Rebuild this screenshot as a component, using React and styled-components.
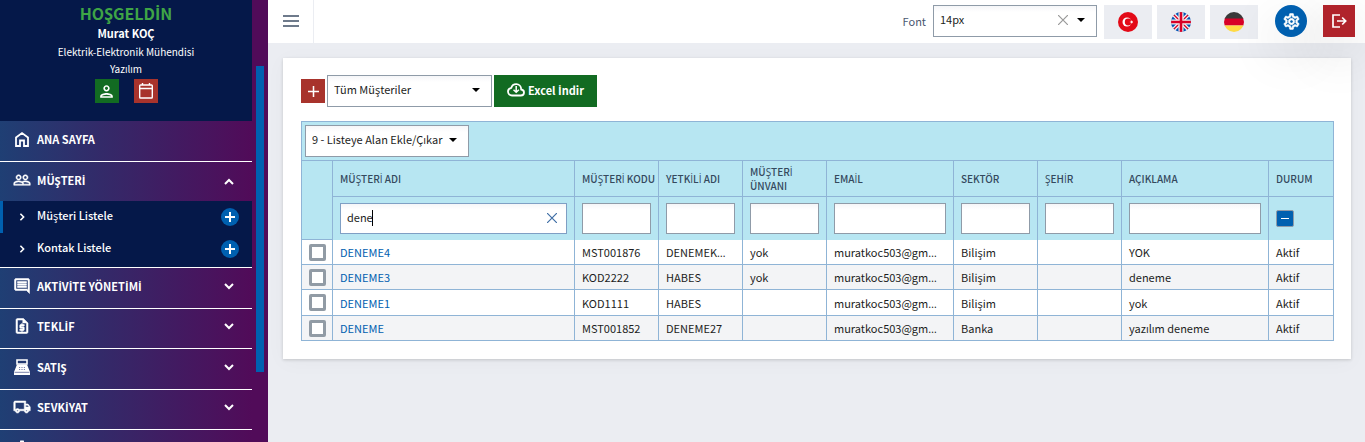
import React from 'react';
import styled, { createGlobalStyle, css } from 'styled-components';
import {
  MdPeopleOutline, MdOutlineRequestQuote, MdOutlineLocalShipping,
  MdOutlinePerson, MdOutlineComment, MdOutlineSettings,
} from 'react-icons/md';

const FONT = '"Noto Sans CJK JP", "Open Sans", "Noto Sans", sans-serif';
const LATIN = '"Open Sans", "Noto Sans", sans-serif';

const GlobalStyle = createGlobalStyle`
  *, *::before, *::after { box-sizing: border-box; }
  body { margin: 0; font: 11px/20px ${FONT}; color: #1c1d22; background: #ebedf2; }
  button, input, select { font: inherit; color: inherit; margin: 0; border-radius: 0; }
  a { text-decoration: none; color: inherit; }
  svg { display: block; flex: none; }
`;

/* The CJK family has no dotted capital I and centres its ellipsis, so both take the Latin family. */
const LatinGlyph = styled.span`
  font-family: ${LATIN};
  line-height: 1;
`;
const Label = ({ children }) => (
  <span>
    {children.split(/([İ…])/).map((part, i) => (/[İ…]/.test(part) ? <LatinGlyph key={i}>{part}</LatinGlyph> : part))}
  </span>
);

const Page = styled.div`
  display: grid;
  grid-template-columns: 268px minmax(0, 1fr);
  height: 100vh;
  overflow: hidden;
`;

/* ---------- sidebar ---------- */
const Sidebar = styled.aside`
  display: grid;
  grid-template-columns: minmax(0, 1fr) 16px;
  min-height: 0;
  overflow: hidden;
  background: linear-gradient(to right, #1f3f74, #510b59 94%);
  color: #fff;
`;
const SidebarBody = styled.div`
  min-height: 0;
  overflow: hidden;
`;
const ScrollTrack = styled.div`
  padding: 66px 4px 0;
`;
const ScrollThumb = styled.div`
  height: 306px;
  background: #0060b0;
`;
const Profile = styled.header`
  display: flex;
  flex-direction: column;
  align-items: center;
  height: 121px;
  padding-top: 3px;
  background: #051849;
  font-size: 10px;
  line-height: 17px;
`;
const Welcome = styled.strong`
  font-size: 16px;
  line-height: 20px;
  color: #3fa546;
`;
const UserName = styled.strong`
  font-size: 11px;
  line-height: 20px;
`;
const ProfileActions = styled.div`
  display: flex;
  gap: 15px;
  margin-top: 2px;
`;
const IconButton = styled.button`
  display: grid;
  place-items: center;
  width: ${p => p.$size || 24}px;
  height: ${p => p.$size || 24}px;
  padding: 0;
  border: 0;
  border-radius: ${p => (p.$round ? '50%' : 0)};
  background: ${p => p.$bg};
  color: #fff;
  box-shadow: ${p => (p.$raised ? '0 16px 50px rgba(0, 0, 0, 0.15)' : 'none')};
`;
const MenuRow = styled.a`
  display: grid;
  grid-template-columns: 18px 1fr 10px;
  align-items: center;
  gap: 6px;
  height: ${p => (p.$height ? p.$height + 'px' : 'auto')};
  padding: 0 18px 4px 13px;
  border-bottom: ${p => (p.$open ? 0 : '1px solid #fff')};
  font-weight: 700;
`;
const MenuGroup = styled.div`
  display: grid;
  grid-auto-rows: 1fr;
  height: 162px;
`;
const SubMenu = styled.div`
  height: 67px;
  background: #051849;
  border-bottom: 1px solid #fff;
`;
const SubRow = styled.div`
  display: grid;
  grid-template-columns: 12px 1fr 18px;
  align-items: center;
  gap: 7px;
  height: 32px;
  padding: 0 13px 0 15px;
  border-left: 3px solid ${p => (p.$active ? '#0060b0' : 'transparent')};
  font-weight: 500;
`;
const SubLink = styled.a`
  padding-bottom: 4px;
`;

/* ---------- top bar ---------- */
const Main = styled.div`
  min-width: 0;
`;
const TopBar = styled.header`
  position: relative;
  z-index: 1;
  display: flex;
  align-items: center;
  height: 43px;
  padding-right: 10px;
  background: #fff;
`;
const MenuToggle = styled.button`
  display: grid;
  place-items: center;
  width: 46px;
  height: 43px;
  padding: 0 0 2px;
  border: 0;
  border-right: 1px solid #ebedf2;
  background: none;
  color: #3f4f66;
`;
const FontField = styled.div`
  display: flex;
  align-items: center;
  gap: 7px;
  margin-left: auto;
  padding-bottom: 2px;
  color: #4a5670;
`;
const Flags = styled.div`
  display: flex;
  gap: 5px;
  margin: 0 17px 0 7px;
`;
const FlagButton = styled.button`
  display: grid;
  place-items: center;
  width: 48px;
  height: 34px;
  padding: 0;
  border: 0;
  background: #ebedf2;
`;
const Session = styled.div`
  display: flex;
  gap: 16px;
  padding-bottom: 1px;
`;

/* ---------- form parts ---------- */
const SelectBox = styled.div`
  position: relative;
  width: ${p => p.$width}px;
`;
const Select = styled.select`
  appearance: none;
  display: block;
  width: 100%;
  height: 32px;
  padding: 0 6px 4px;
  border: 1px solid #8f9ba8;
  background: linear-gradient(#f5f6f8, #fff 6px);
  color: #1c1d22;
  line-height: 20px;
`;
const Adornment = styled.span`
  position: absolute;
  top: 0;
  bottom: 0;
  right: 12px;
  display: flex;
  align-items: center;
  gap: 9px;
  padding-bottom: 2px;
  pointer-events: none;
  color: #000;
`;
const FilterBox = styled.div`
  position: relative;
`;
const FilterInput = styled.input`
  display: block;
  width: 100%;
  height: 31px;
  padding: 0 6px 2px;
  border: 1px solid ${p => (p.$active ? '#7f9fc4' : '#8f9ba8')};
  background: linear-gradient(#f5f6f8, #fff 6px);
  outline: 0;
`;
const Caret = styled.span`
  position: absolute;
  top: 7px;
  left: 32px;
  width: 1px;
  height: 16px;
  background: #000;
`;
const ClearButton = styled.button`
  position: absolute;
  top: 0;
  right: 10px;
  height: 31px;
  padding: 0;
  border: 0;
  background: none;
  color: #3f6ea5;
`;
const Check = styled.input`
  appearance: none;
  display: block;
  width: 17px;
  height: 17px;
  border: 3px solid #919ba5;
  border-radius: 2px;
  background: #fff;
`;
const StateCheck = styled(Check)`
  width: 18px;
  border: 1px solid #8f9ba8;
  background: linear-gradient(#fff, #fff) center / 8px 1px no-repeat #0060b0;
`;

/* ---------- list ---------- */
const Card = styled.main`
  margin: 15px 14px 0 15px;
  padding: 17px 17px 18px 18px;
  background: #fff;
  box-shadow: 0 1px 3px rgba(0, 0, 0, 0.16), 0 3px 20px rgba(0, 0, 0, 0.03);
`;
const Tools = styled.div`
  display: flex;
  align-items: center;
  gap: 2px;
  margin-bottom: 14px;
`;
const ExportButton = styled.button`
  display: flex;
  align-items: center;
  justify-content: center;
  gap: 3px;
  width: 103px;
  height: 32px;
  padding: 0 0 2px;
  border: 0;
  background: #126b22;
  color: #fff;
  font-weight: 700;
`;
const ListBar = styled.div`
  height: 39px;
  padding: 3px;
  border: 1px solid #8fb4d6;
  border-bottom: 0;
  background: #b7e6f2;
`;
const Table = styled.table`
  width: 100%;
  table-layout: fixed;
  border-collapse: collapse;
`;
const cell = css`
  padding: 0 7px;
  border: 1px solid #8fb4d6;
  text-align: left;
`;
const Th = styled.th`
  ${cell}
  height: 36px;
  padding-right: 2px;
  background: #b7e6f2;
  color: #34495e;
  font-size: 10px;
  line-height: 14px;
  font-weight: 500;
`;
const FilterCell = styled.td`
  ${cell}
  height: 43px;
  border-bottom: 0;
  background: #b7e6f2;
`;
const Row = styled.tr`
  height: 25px;
  &:nth-child(even) { background: #f3f4f6; }
  &:nth-child(3n) { height: 26px; }
`;
const Td = styled.td`
  ${cell}
  border-top: 0;
  overflow: hidden;
  white-space: nowrap;
  text-overflow: ellipsis;
  line-height: 18px;
`;
const NameLink = styled.a`
  color: #0060b0;
`;

/* ---------- drawings ---------- */
const Chevron = ({ dir = 'down', size = 10, w = 2 }) => {
  const d = { down: 'M1 3l4 4 4-4', up: 'M1 9l4-4 4 4', right: 'M3 1l4 4-4 4' }[dir];
  return <svg width={size} height={size} viewBox="0 0 10 10" fill="none" stroke="currentColor" strokeWidth={w}><path d={d} /></svg>;
};
const Triangle = () => <svg width="8" height="4" viewBox="0 0 8 4"><path d="M0 0h8L4 4z" fill="currentColor" /></svg>;
const Cross = ({ color = 'currentColor' }) => (
  <svg width="10" height="10" viewBox="0 0 10 10" stroke={color} strokeWidth="1.2"><path d="M0 0l10 10M10 0L0 10" /></svg>
);
const Plus = ({ w = 2, size = 10 }) => (
  <svg width={size} height={size} viewBox="0 0 10 10" stroke="currentColor" strokeWidth={w}><path d="M5 0v10M0 5h10" /></svg>
);
const Home = () => (
  <svg width="18" height="18" viewBox="0 0 18 18" fill="none" stroke="currentColor" strokeWidth="1.8">
    <path d="M3 7.500L9 3l6 4.500V16h-4v-5.500H7V16H3z" />
  </svg>
);
const Register = () => (
  <svg width="18" height="18" viewBox="0 0 18 18">
    <path d="M4 2h10v4H4z" fill="none" stroke="currentColor" strokeWidth="1.600" />
    <path d="M4 6.500h10L17 14v3H1v-3z" fill="currentColor" />
    <path d="M6 9.500h1.200M8.400 9.500h1.200M10.800 9.500H12M6 11.500h1.200M8.400 11.500h1.200M10.800 11.500H12M1.500 14.300h15" stroke="#7b83ab" strokeWidth="1" />
  </svg>
);
const Calendar = () => (
  <svg width="14" height="16" viewBox="0 0 14 16" fill="none" stroke="currentColor" strokeWidth="1.4">
    <rect x="0.7" y="2" width="12.6" height="13" rx="0.8" /><path d="M1 5.5h12M3.5 0v2M10.5 0v2" />
  </svg>
);
const Burger = () => (
  <svg width="16" height="12" viewBox="0 0 16 12" stroke="currentColor" strokeWidth="1.5"><path d="M0 1h16M0 6h16M0 11h16" /></svg>
);
const CloudDownload = () => (
  <svg width="18" height="14" viewBox="0 0 18 14" fill="none" stroke="currentColor" strokeWidth="1.8">
    <path d="M5 12.500h8.800c2 0 3.200-1.300 3.200-3 0-1.600-1.100-2.800-2.800-3C14.200 3.400 12 1.200 9.200 1.200c-2.400 0-4.300 1.400-4.900 3.600C2.300 5.200 1 6.700 1 8.600c0 2.200 1.700 3.900 4 3.900z" />
    <path d="M9.200 3v6M6.500 6.800l2.700 2.500 2.700-2.500" strokeWidth="1.500" />
  </svg>
);
const Exit = () => (
  <svg width="15" height="14" viewBox="0 0 15 14" fill="none" stroke="currentColor" strokeWidth="1.700">
    <path d="M8 1H1v12h7M5 7h9M10.200 3.500L13.700 7l-3.500 3.500" />
  </svg>
);
const TurkishFlag = () => (
  <svg width="20" height="20" viewBox="0 0 20 20">
    <circle cx="10" cy="10" r="10" fill="#e30a17" /><circle cx="9" cy="10" r="4.500" fill="#fff" />
    <circle cx="10.200" cy="10" r="3.400" fill="#e30a17" />
    <path d="M11.500 10l1.400-.5v-1.500l.9 1.200 1.400-.4-.9 1.200.9 1.200-1.400-.4-.9 1.200v-1.500z" fill="#fff" />
  </svg>
);
const BritishFlag = () => (
  <svg width="20" height="20" viewBox="0 0 20 20">
    <clipPath id="uk"><circle cx="10" cy="10" r="10" /></clipPath>
    <g clipPath="url(#uk)">
      <path d="M0 0h20v20H0z" fill="#0052b4" />
      <path d="M0 0l20 20M20 0L0 20" stroke="#f0f0f0" strokeWidth="4" />
      <path d="M0 0l20 20M20 0L0 20" stroke="#d80027" strokeWidth="1.300" />
      <path d="M10 0v20M0 10h20" stroke="#f0f0f0" strokeWidth="5" />
      <path d="M10 0v20M0 10h20" stroke="#d80027" strokeWidth="2.600" />
    </g>
  </svg>
);
const GermanFlag = () => (
  <svg width="20" height="20" viewBox="0 0 20 20">
    <clipPath id="de"><circle cx="10" cy="10" r="10" /></clipPath>
    <g clipPath="url(#de)">
      <path d="M0 0h20v7H0z" fill="#3a3a3a" /><path d="M0 6.500h20v7H0z" fill="#d80027" /><path d="M0 13.500h20V20H0z" fill="#ffda44" />
    </g>
  </svg>
);
const Bold = styled.span`
  path:not([fill='none']) { stroke: currentColor; stroke-width: 0.7px; }
  path[fill='none'] { stroke: none; }
`;

const groups = [
  ['AKTİVİTE YÖNETİMİ', <Bold><MdOutlineComment size={18} /></Bold>],
  ['TEKLİF', <Bold><MdOutlineRequestQuote size={18} /></Bold>],
  ['SATIŞ', <Register />],
  ['SEVKİYAT', <Bold><MdOutlineLocalShipping size={18} /></Bold>],
];
const columns = [
  ['MÜŞTERİ ADI'], ['MÜŞTERİ KODU', 84], ['YETKİLİ ADI', 84], ['MÜŞTERİ ÜNVANI', 84], ['EMAİL', 127],
  ['SEKTÖR', 84], ['ŞEHİR', 84], ['AÇIKLAMA', 147], ['DURUM', 65],
];
const rows = [
  ['DENEME4', 'MST001876', 'DENEMEK…', 'yok', 'muratkoc503@gm…', 'Bilişim', '', 'YOK', 'Aktif'],
  ['DENEME3', 'KOD2222', 'HABES', 'yok', 'muratkoc503@gm…', 'Bilişim', '', 'deneme', 'Aktif'],
  ['DENEME1', 'KOD1111', 'HABES', '', 'muratkoc503@gm…', 'Bilişim', '', 'yok', 'Aktif'],
  ['DENEME', 'MST001852', 'DENEME27', '', 'muratkoc503@gm…', 'Banka', '', 'yazılım deneme', 'Aktif'],
];

export default function App() {
  return (
    <Page>
      <GlobalStyle />
      <Sidebar>
        <SidebarBody>
          <Profile>
            <Welcome><Label>HOŞGELDİN</Label></Welcome>
            <UserName>Murat KOÇ</UserName>
            <span>Elektrik-Elektronik Mühendisi</span>
            <span>Yazılım</span>
            <ProfileActions>
              <IconButton $bg="#126b22" aria-label="Profil"><MdOutlinePerson size={19} /></IconButton>
              <IconButton $bg="#a8332c" aria-label="Takvim"><Calendar /></IconButton>
            </ProfileActions>
          </Profile>
          <nav>
            <MenuRow href="#" $height={41}><Home /><Label>ANA SAYFA</Label></MenuRow>
            <MenuRow href="#" $height={39} $open>
              <Bold><MdPeopleOutline size={18} /></Bold><Label>MÜŞTERİ</Label><Chevron dir="up" />
            </MenuRow>
            <SubMenu>
              {['Müşteri Listele', 'Kontak Listele'].map((t, i) => (
                <SubRow key={t} $active={i === 0}>
                  <Chevron dir="right" size={8} />
                  <SubLink href="#">{t}</SubLink>
                  <IconButton $bg="#0060b0" $round $size={18} aria-label={t + ' ekle'}><Plus /></IconButton>
                </SubRow>
              ))}
            </SubMenu>
            <MenuGroup>
              {groups.map(([t, icon]) => (
                <MenuRow key={t} href="#">{icon}<Label>{t}</Label><Chevron /></MenuRow>
              ))}
            </MenuGroup>
            <MenuRow href="#" $height={41} aria-label="Ayarlar"><MdOutlineSettings size={18} /></MenuRow>
          </nav>
        </SidebarBody>
        <ScrollTrack><ScrollThumb /></ScrollTrack>
      </Sidebar>

      <Main>
        <TopBar>
          <MenuToggle aria-label="Menü"><Burger /></MenuToggle>
          <FontField>
            <label htmlFor="font">Font</label>
            <SelectBox $width={164}>
              <Select id="font"><option>14px</option></Select>
              <Adornment><Cross color="#999" /><Triangle /></Adornment>
            </SelectBox>
          </FontField>
          <Flags>
            <FlagButton aria-label="Türkçe"><TurkishFlag /></FlagButton>
            <FlagButton aria-label="English"><BritishFlag /></FlagButton>
            <FlagButton aria-label="Deutsch"><GermanFlag /></FlagButton>
          </Flags>
          <Session>
            <IconButton $bg="#0060b0" $round $raised $size={32} aria-label="Ayarlar"><Bold><MdOutlineSettings size={19} /></Bold></IconButton>
            <IconButton $bg="#b0232b" $raised $size={32} aria-label="Çıkış"><Exit /></IconButton>
          </Session>
        </TopBar>

        <Card>
          <Tools>
            <IconButton $bg="#a8332c" aria-label="Yeni müşteri"><Plus w={1.4} size={11} /></IconButton>
            <SelectBox $width={165}>
              <Select aria-label="Müşteri grubu"><option>Tüm Müşteriler</option></Select>
              <Adornment><Triangle /></Adornment>
            </SelectBox>
            <ExportButton><CloudDownload /><Label>Excel İndir</Label></ExportButton>
          </Tools>
          <ListBar>
            <SelectBox $width={164}>
              <Select aria-label="Alanlar"><option>9 - Listeye Alan Ekle/Çıkar</option></Select>
              <Adornment><Triangle /></Adornment>
            </SelectBox>
          </ListBar>
          <Table>
            <colgroup>
              <col style={{ width: 31 }} />
              {columns.map(([t, w]) => <col key={t} style={{ width: w }} />)}
            </colgroup>
            <thead>
              <tr>
                <Th rowSpan={2} aria-label="Seç" />
                {columns.map(([t]) => <Th key={t}><Label>{t}</Label></Th>)}
              </tr>
              <tr>
                {columns.map(([t], i) => (
                  <FilterCell key={t}>
                    {i === 8 ? <StateCheck type="checkbox" aria-label={t} /> : (
                      <FilterBox>
                        <FilterInput aria-label={t} $active={i === 0} defaultValue={i === 0 ? 'dene' : ''} />
                        {i === 0 && <><Caret /><ClearButton aria-label="Temizle"><Cross /></ClearButton></>}
                      </FilterBox>
                    )}
                  </FilterCell>
                ))}
              </tr>
            </thead>
            <tbody>
              {rows.map(r => (
                <Row key={r[0]}>
                  <Td><Check type="checkbox" aria-label={r[0]} /></Td>
                  {r.map((v, i) => (
                    <Td key={i}>{i === 0 ? <NameLink href="#">{v}</NameLink> : <Label>{v}</Label>}</Td>
                  ))}
                </Row>
              ))}
            </tbody>
          </Table>
        </Card>
      </Main>
    </Page>
  );
}
